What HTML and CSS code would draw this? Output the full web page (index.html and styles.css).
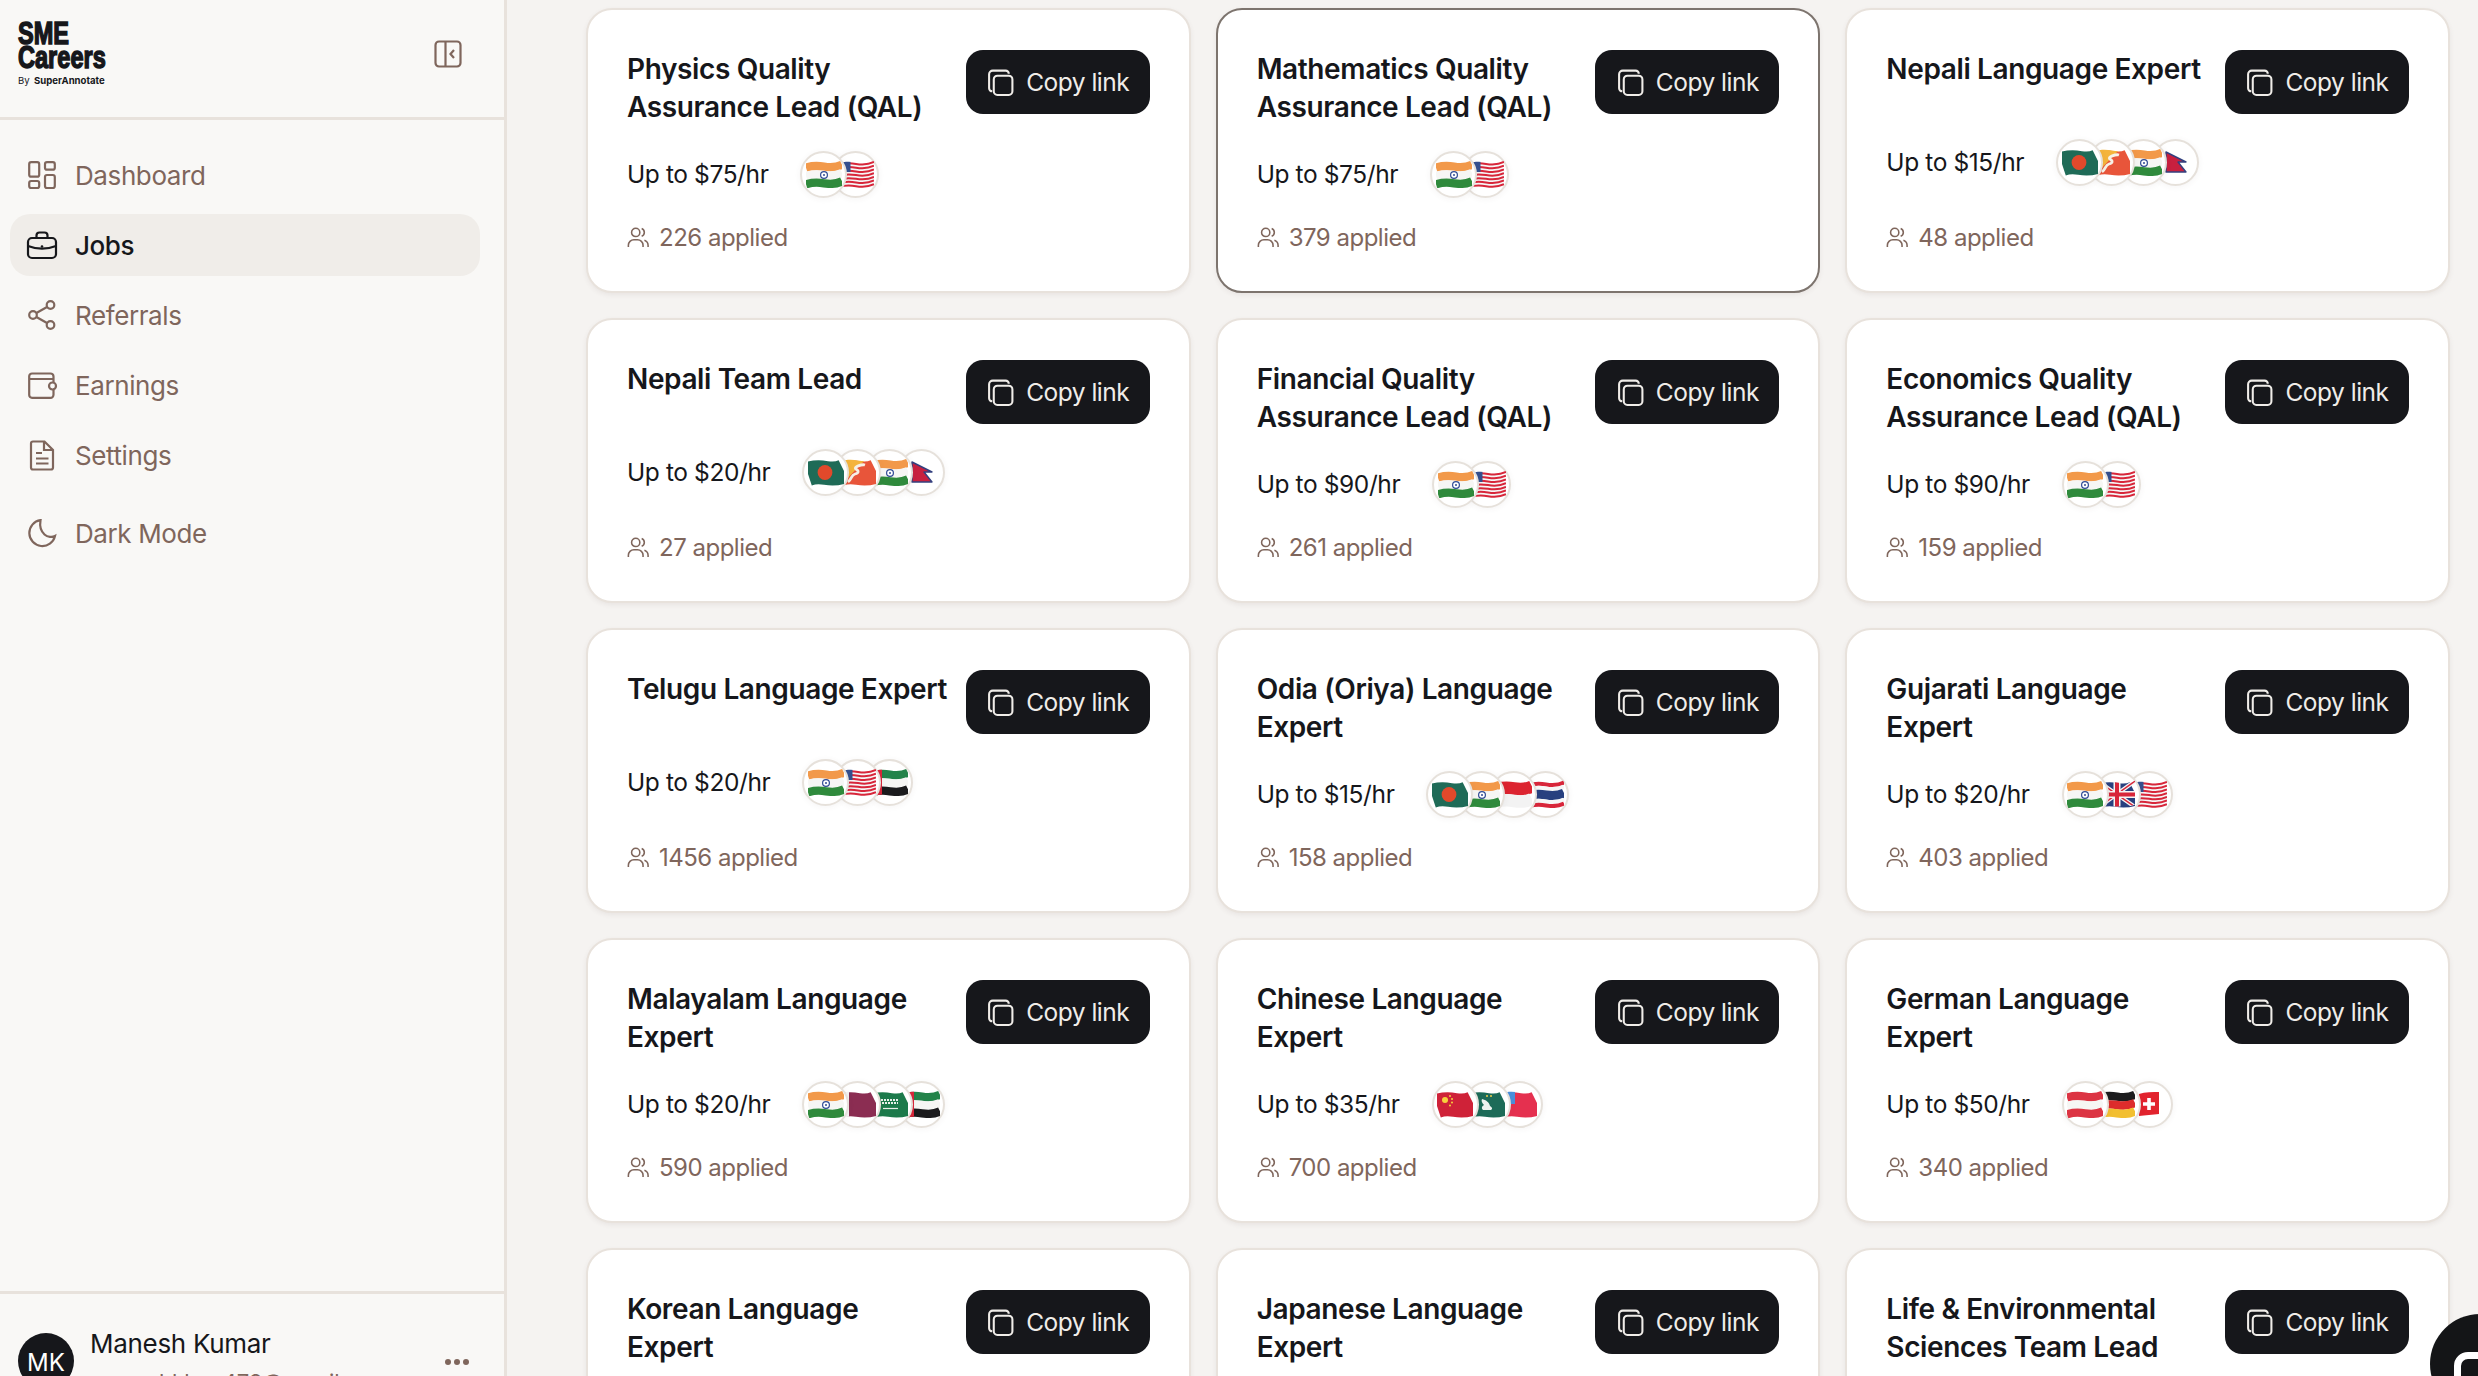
FILE: index.html
```html
<!DOCTYPE html>
<html lang="en">
<head>
  <meta charset="UTF-8" />
  <title>SME Careers – Jobs</title>
  <link rel="stylesheet" href="styles.css">
</head>
<body>

<!-- shared icons and flags -->
<svg class="defs" aria-hidden="true">
  <defs>
    <path id="w" d="M0 1.5C6 -.5 12 -.5 18 .5S30 1.5 36 -1.5" fill="none"/>
    <clipPath id="flag-shape"><path d="M0 3.500C6 1.500 12 1.500 18 2.500S30 3.500 36 .5V24.500C30 27.500 24 26.500 18 26.500S6 26.500 0 28Z"/></clipPath>

    <symbol id="i-copy" viewBox="0 0 28 28">
      <path d="M6 22.500a3 3 0 0 1-3-3V6a3.500 3.500 0 0 1 3.500-3.500H19a3 3 0 0 1 3 3" fill="none" stroke="currentColor" stroke-width="2"/>
      <rect x="7.500" y="7.500" width="18" height="18.500" rx="3.500" fill="none" stroke="currentColor" stroke-width="2"/>
    </symbol>

    <symbol id="f-in" viewBox="0 0 36 28">
      <use href="#w" y="6.200" stroke="#f2994a" stroke-width="8.400"/>
      <use href="#w" y="14.500" stroke="#f6f6f4" stroke-width="8.400"/>
      <use href="#w" y="22.800" stroke="#2f8a3c" stroke-width="8.400"/>
      <circle cx="18" cy="15" r="3.400" fill="#fff" stroke="#2f4a94" stroke-width="1.200"/>
      <circle cx="18" cy="15" r="1" fill="#2f4a94"/>
    </symbol>
    <symbol id="f-us" viewBox="0 0 36 28">
      <use href="#w" y="14.500" stroke="#f6f6f6" stroke-width="24"/>
      <use href="#w" y="3.500" stroke="#d8263a" stroke-width="2"/>
      <use href="#w" y="7.200" stroke="#d8263a" stroke-width="2"/>
      <use href="#w" y="10.900" stroke="#d8263a" stroke-width="2"/>
      <use href="#w" y="14.600" stroke="#d8263a" stroke-width="2"/>
      <use href="#w" y="18.300" stroke="#d8263a" stroke-width="2"/>
      <use href="#w" y="22" stroke="#d8263a" stroke-width="2"/>
      <use href="#w" y="25.700" stroke="#d8263a" stroke-width="2"/>
      <g clip-path="url(#flag-shape)"><rect x="0" y="0" width="12.500" height="12" fill="#34508f"/></g>
    </symbol>
    <symbol id="f-bd" viewBox="0 0 36 28">
      <use href="#w" y="14.500" stroke="#1f6b57" stroke-width="24"/>
      <circle cx="17" cy="14.500" r="7.400" fill="#e2492b"/>
    </symbol>
    <symbol id="f-bt" viewBox="0 0 36 28">
      <use href="#w" y="14.500" stroke="#e8553a" stroke-width="24"/>
      <g clip-path="url(#flag-shape)"><path d="M0 0H27L0 28Z" fill="#f4b43c"/></g>
      <path d="M8 24C12 21 11 17 15 16S19 13 16 11 22 6 25 7" fill="none" stroke="#f6f1e6" stroke-width="2.800"/>
    </symbol>
    <symbol id="f-np" viewBox="0 0 36 28">
      <path d="M8 4L28 14H20L28 24H8Z" fill="#c8203f" stroke="#33407f" stroke-width="1.400" stroke-linejoin="round"/>
    </symbol>
    <symbol id="f-ae" viewBox="0 0 36 28">
      <use href="#w" y="6.200" stroke="#23834a" stroke-width="8.400"/>
      <use href="#w" y="14.500" stroke="#f6f6f4" stroke-width="8.400"/>
      <use href="#w" y="22.800" stroke="#1b1b1d" stroke-width="8.400"/>
      <g clip-path="url(#flag-shape)"><rect width="10" height="28" fill="#d8263a"/></g>
    </symbol>
    <symbol id="f-id" viewBox="0 0 36 28">
      <use href="#w" y="8" stroke="#dc2430" stroke-width="12.500"/>
      <use href="#w" y="20.500" stroke="#f3f3f3" stroke-width="12.500"/>
    </symbol>
    <symbol id="f-th" viewBox="0 0 36 28">
      <use href="#w" y="4" stroke="#d8263a" stroke-width="4"/>
      <use href="#w" y="8" stroke="#f6f6f6" stroke-width="4"/>
      <use href="#w" y="14.500" stroke="#28407f" stroke-width="9"/>
      <use href="#w" y="21" stroke="#f6f6f6" stroke-width="4"/>
      <use href="#w" y="25" stroke="#d8263a" stroke-width="4"/>
    </symbol>
    <symbol id="f-gb" viewBox="0 0 36 28">
      <use href="#w" y="14.500" stroke="#28407f" stroke-width="24"/>
      <g clip-path="url(#flag-shape)">
        <path d="M0 2L36 27M36 1L0 27" stroke="#f4f4f4" stroke-width="4"/>
        <path d="M0 2L36 27M36 1L0 27" stroke="#d8263a" stroke-width="1.500"/>
        <path d="M18 0V28M0 14.500H36" stroke="#f4f4f4" stroke-width="7"/>
        <path d="M18 0V28M0 14.500H36" stroke="#d8263a" stroke-width="4"/>
      </g>
    </symbol>
    <symbol id="f-qa" viewBox="0 0 36 28">
      <use href="#w" y="14.500" stroke="#8b2d52" stroke-width="24"/>
      <g clip-path="url(#flag-shape)"><rect width="9" height="28" fill="#f4f4f4"/></g>
    </symbol>
    <symbol id="f-sa" viewBox="0 0 36 28">
      <use href="#w" y="14.500" stroke="#1c7a4b" stroke-width="24"/>
      <path d="M9 10h18M10 13h16" stroke="#e8f0ea" stroke-width="2" stroke-dasharray="2 1"/>
      <path d="M11 18.500h15" stroke="#e8f0ea" stroke-width="1.200"/>
    </symbol>
    <symbol id="f-cn" viewBox="0 0 36 28">
      <use href="#w" y="14.500" stroke="#cf2238" stroke-width="24"/>
      <circle cx="8" cy="10" r="3" fill="#f7d13c"/>
      <circle cx="13" cy="6" r="1" fill="#f7d13c"/>
      <circle cx="15" cy="9" r="1" fill="#f7d13c"/>
      <circle cx="15" cy="12.500" r="1" fill="#f7d13c"/>
      <circle cx="13" cy="15.500" r="1" fill="#f7d13c"/>
    </symbol>
    <symbol id="f-mo" viewBox="0 0 36 28">
      <use href="#w" y="14.500" stroke="#1d6b58" stroke-width="24"/>
      <path d="M13 9c4 1 7 3 8 7 2 1 3 3 1 4h-8c-2-2-1-4 1-5-2-2-3-4-2-6Z" fill="#eef3ef"/>
      <circle cx="18" cy="6" r="1" fill="#f1cf4a"/>
      <circle cx="22" cy="6" r="1" fill="#f1cf4a"/>
    </symbol>
    <symbol id="f-tw" viewBox="0 0 36 28">
      <use href="#w" y="14.500" stroke="#e5304f" stroke-width="24"/>
      <g clip-path="url(#flag-shape)"><rect width="14" height="14" fill="#4a8fdc"/></g>
    </symbol>
    <symbol id="f-at" viewBox="0 0 36 28">
      <use href="#w" y="6.200" stroke="#dc3443" stroke-width="8.400"/>
      <use href="#w" y="14.500" stroke="#f6f6f4" stroke-width="8.400"/>
      <use href="#w" y="22.800" stroke="#dc3443" stroke-width="8.400"/>
    </symbol>
    <symbol id="f-de" viewBox="0 0 36 28">
      <use href="#w" y="6.200" stroke="#1c1c1e" stroke-width="8.400"/>
      <use href="#w" y="14.500" stroke="#dd2c2c" stroke-width="8.400"/>
      <use href="#w" y="22.800" stroke="#f2bf30" stroke-width="8.400"/>
    </symbol>
    <symbol id="f-ch" viewBox="0 0 36 28">
      <path d="M8 4C14 2 22 2 28 2V24C22 25 14 25 8 26Z" fill="#e2232e"/>
      <path d="M18 8V20M12 14H24" stroke="#fff" stroke-width="3.600"/>
    </symbol>

    <symbol id="i-people" viewBox="0 0 24 24">
      <circle cx="9.500" cy="7" r="4.500" fill="none" stroke="currentColor" stroke-width="1.700"/>
      <path d="M1.500 23v-2a6 6 0 0 1 6-6h4a6 6 0 0 1 6 6v2M16 2.800a4.500 4.500 0 0 1 0 8.400M19 15.500a6 6 0 0 1 4 5.500v2" fill="none" stroke="currentColor" stroke-width="1.700"/>
    </symbol>
  </defs>
</svg>

<div class="app">
  <aside class="sidebar">
    <div class="side-top">
      <div class="logo">
        <div class="logo-main">SME<br>Careers</div>
        <div class="logo-by"><span>By</span> SuperAnnotate</div>
      </div>
      <button class="collapse">
        <svg width="28" height="28" viewBox="0 0 28 28" fill="none" stroke="currentColor" stroke-width="2.200">
          <rect x="1.500" y="1.500" width="25" height="25" rx="3.500"/>
          <path d="M11.500 1.500v25M20 10l-3.500 4 3.500 4"/>
        </svg>
      </button>
    </div>

    <nav class="nav">
      <a class="nav-item">
        <svg class="nav-icon" viewBox="0 0 32 32"><rect x="3.200" y="3.200" width="10" height="14.500" rx="2"/><rect x="19" y="3.200" width="9.800" height="7.500" rx="2"/><rect x="3.200" y="22" width="10" height="7" rx="2"/><rect x="19" y="16" width="9.800" height="13" rx="2"/></svg>
        Dashboard
      </a>
      <a class="nav-item active">
        <svg class="nav-icon" viewBox="0 0 32 32"><rect x="2" y="9" width="28" height="20" rx="4"/><path d="M10.500 9V6.500a3 3 0 0 1 3-3h5a3 3 0 0 1 3 3V9M2 17c9 3.500 19 3.500 28 0"/><circle class="dot" cx="16" cy="17.500" r="1.300"/></svg>
        Jobs
      </a>
      <a class="nav-item">
        <svg class="nav-icon" viewBox="0 0 32 32"><circle cx="24.500" cy="6" r="3.800"/><circle cx="7" cy="16" r="3.800"/><circle cx="24.500" cy="26" r="3.800"/><path d="M10.400 14L21 8M10.400 18L21 24"/></svg>
        Referrals
      </a>
      <a class="nav-item">
        <svg class="nav-icon" viewBox="0 0 32 32"><path d="M27.500 13V7.500a3 3 0 0 0-3-3H6a2.800 2.800 0 0 0-2.800 2.800V26a2.800 2.800 0 0 0 2.800 2.800h18.500a3 3 0 0 0 3-3V21M3.200 10h24.300"/><rect x="23" y="13.500" width="7" height="7" rx="3.500"/></svg>
        Earnings
      </a>
      <a class="nav-item">
        <svg class="nav-icon" viewBox="0 0 32 32"><path d="M7 2.500h11.500L27 11v17.500a2 2 0 0 1-2 2H7a2 2 0 0 1-2-2v-24a2 2 0 0 1 2-2ZM18 2.500V11h9M10 14h6M10 19.500h12.500M10 24.500h12.500"/></svg>
        Settings
      </a>
      <a class="nav-item nav-mode">
        <svg class="nav-icon" viewBox="0 0 32 32"><path d="M14.500 3.200A13 13 0 1 0 29 19c-2.500 1.500-7.500 1.300-10.500-1.500S13.500 9 14.500 3.200Z"/></svg>
        Dark Mode
      </a>
    </nav>

    <div class="side-user">
      <div class="avatar">MK</div>
      <div class="user-text">
        <div class="user-name">Manesh Kumar</div>
        <div class="user-mail">maneshkhan479@gmail.com</div>
      </div>
      <div class="user-more"><span></span><span></span><span></span></div>
    </div>
  </aside>

  <main class="jobs">
    <div class="card">
      <div class="card-head"><h3>Physics Quality Assurance Lead (QAL)</h3><button class="copy"><svg><use href="#i-copy"/></svg>Copy link</button></div>
      <div class="pay">Up to $75/hr <div class="flags"><span class="flag"><svg><use href="#f-in"/></svg></span><span class="flag"><svg><use href="#f-us"/></svg></span></div></div>
      <div class="applied"><svg><use href="#i-people"/></svg>226 applied</div>
    </div>
    <div class="card hovered">
      <div class="card-head"><h3>Mathematics Quality Assurance Lead (QAL)</h3><button class="copy"><svg><use href="#i-copy"/></svg>Copy link</button></div>
      <div class="pay">Up to $75/hr <div class="flags"><span class="flag"><svg><use href="#f-in"/></svg></span><span class="flag"><svg><use href="#f-us"/></svg></span></div></div>
      <div class="applied"><svg><use href="#i-people"/></svg>379 applied</div>
    </div>
    <div class="card">
      <div class="card-head"><h3>Nepali Language Expert</h3><button class="copy"><svg><use href="#i-copy"/></svg>Copy link</button></div>
      <div class="pay">Up to $15/hr <div class="flags"><span class="flag"><svg><use href="#f-bd"/></svg></span><span class="flag"><svg><use href="#f-bt"/></svg></span><span class="flag"><svg><use href="#f-in"/></svg></span><span class="flag"><svg><use href="#f-np"/></svg></span></div></div>
      <div class="applied"><svg><use href="#i-people"/></svg>48 applied</div>
    </div>

    <div class="card">
      <div class="card-head"><h3>Nepali Team Lead</h3><button class="copy"><svg><use href="#i-copy"/></svg>Copy link</button></div>
      <div class="pay">Up to $20/hr <div class="flags"><span class="flag"><svg><use href="#f-bd"/></svg></span><span class="flag"><svg><use href="#f-bt"/></svg></span><span class="flag"><svg><use href="#f-in"/></svg></span><span class="flag"><svg><use href="#f-np"/></svg></span></div></div>
      <div class="applied"><svg><use href="#i-people"/></svg>27 applied</div>
    </div>
    <div class="card">
      <div class="card-head"><h3>Financial Quality Assurance Lead (QAL)</h3><button class="copy"><svg><use href="#i-copy"/></svg>Copy link</button></div>
      <div class="pay">Up to $90/hr <div class="flags"><span class="flag"><svg><use href="#f-in"/></svg></span><span class="flag"><svg><use href="#f-us"/></svg></span></div></div>
      <div class="applied"><svg><use href="#i-people"/></svg>261 applied</div>
    </div>
    <div class="card">
      <div class="card-head"><h3>Economics Quality Assurance Lead (QAL)</h3><button class="copy"><svg><use href="#i-copy"/></svg>Copy link</button></div>
      <div class="pay">Up to $90/hr <div class="flags"><span class="flag"><svg><use href="#f-in"/></svg></span><span class="flag"><svg><use href="#f-us"/></svg></span></div></div>
      <div class="applied"><svg><use href="#i-people"/></svg>159 applied</div>
    </div>

    <div class="card">
      <div class="card-head"><h3>Telugu Language Expert</h3><button class="copy"><svg><use href="#i-copy"/></svg>Copy link</button></div>
      <div class="pay">Up to $20/hr <div class="flags"><span class="flag"><svg><use href="#f-in"/></svg></span><span class="flag"><svg><use href="#f-us"/></svg></span><span class="flag"><svg><use href="#f-ae"/></svg></span></div></div>
      <div class="applied"><svg><use href="#i-people"/></svg>1456 applied</div>
    </div>
    <div class="card">
      <div class="card-head"><h3>Odia (Oriya) Language Expert</h3><button class="copy"><svg><use href="#i-copy"/></svg>Copy link</button></div>
      <div class="pay">Up to $15/hr <div class="flags"><span class="flag"><svg><use href="#f-bd"/></svg></span><span class="flag"><svg><use href="#f-in"/></svg></span><span class="flag"><svg><use href="#f-id"/></svg></span><span class="flag"><svg><use href="#f-th"/></svg></span></div></div>
      <div class="applied"><svg><use href="#i-people"/></svg>158 applied</div>
    </div>
    <div class="card">
      <div class="card-head"><h3>Gujarati Language Expert</h3><button class="copy"><svg><use href="#i-copy"/></svg>Copy link</button></div>
      <div class="pay">Up to $20/hr <div class="flags"><span class="flag"><svg><use href="#f-in"/></svg></span><span class="flag"><svg><use href="#f-gb"/></svg></span><span class="flag"><svg><use href="#f-us"/></svg></span></div></div>
      <div class="applied"><svg><use href="#i-people"/></svg>403 applied</div>
    </div>

    <div class="card">
      <div class="card-head"><h3>Malayalam Language Expert</h3><button class="copy"><svg><use href="#i-copy"/></svg>Copy link</button></div>
      <div class="pay">Up to $20/hr <div class="flags"><span class="flag"><svg><use href="#f-in"/></svg></span><span class="flag"><svg><use href="#f-qa"/></svg></span><span class="flag"><svg><use href="#f-sa"/></svg></span><span class="flag"><svg><use href="#f-ae"/></svg></span></div></div>
      <div class="applied"><svg><use href="#i-people"/></svg>590 applied</div>
    </div>
    <div class="card">
      <div class="card-head"><h3>Chinese Language Expert</h3><button class="copy"><svg><use href="#i-copy"/></svg>Copy link</button></div>
      <div class="pay">Up to $35/hr <div class="flags"><span class="flag"><svg><use href="#f-cn"/></svg></span><span class="flag"><svg><use href="#f-mo"/></svg></span><span class="flag"><svg><use href="#f-tw"/></svg></span></div></div>
      <div class="applied"><svg><use href="#i-people"/></svg>700 applied</div>
    </div>
    <div class="card">
      <div class="card-head"><h3>German Language Expert</h3><button class="copy"><svg><use href="#i-copy"/></svg>Copy link</button></div>
      <div class="pay">Up to $50/hr <div class="flags"><span class="flag"><svg><use href="#f-at"/></svg></span><span class="flag"><svg><use href="#f-de"/></svg></span><span class="flag"><svg><use href="#f-ch"/></svg></span></div></div>
      <div class="applied"><svg><use href="#i-people"/></svg>340 applied</div>
    </div>

    <div class="card">
      <div class="card-head"><h3>Korean Language<br>Expert</h3><button class="copy"><svg><use href="#i-copy"/></svg>Copy link</button></div>
    </div>
    <div class="card">
      <div class="card-head"><h3>Japanese Language Expert</h3><button class="copy"><svg><use href="#i-copy"/></svg>Copy link</button></div>
    </div>
    <div class="card">
      <div class="card-head"><h3>Life &amp; Environmental Sciences Team Lead</h3><button class="copy"><svg><use href="#i-copy"/></svg>Copy link</button></div>
    </div>
  </main>
</div>

<!-- chat bubble, cut off by the window corner -->
<div class="chat"><span class="chat-c"></span></div>

</body>
</html>
```

FILE: styles.css
```css
:root {
  --ink: #16171b;
  --brown: #7f665c;
  --line: #e8e2dc;
  --side-bg: #f9f8f6;
  --main-bg: #f5f3f1;
  --active: #f0ede9;
}

* {
  box-sizing: border-box;
}

html, body {
  margin: 0;
  height: 100%;
  overflow: hidden;
}

body {
  font-family: 'Inter', sans-serif;
  color: var(--ink);
  background: var(--main-bg);
}

.defs {
  position: absolute;
  width: 0;
  height: 0;
}

.app {
  display: flex;
  height: 100vh;
}

/* sidebar */
.sidebar {
  flex: 0 0 507px;
  height: 100%;
  display: flex;
  flex-direction: column;
  background: var(--side-bg);
  border-right: 3px solid var(--line);
  overflow: hidden;
}

.side-top {
  flex: 0 0 120px;
  display: flex;
  justify-content: space-between;
  padding: 22px 42px 0 18px;
  border-bottom: 3px solid var(--line);
}

.logo-main {
  font-family: 'Liberation Sans', sans-serif;
  font-weight: 700;
  font-size: 31px;
  line-height: 24px;
  -webkit-text-stroke: 1.5px var(--ink);
  transform: scaleX(0.76);
  transform-origin: left top;
  width: 150px;
}

.logo-by {
  margin-top: 5px;
  font-size: 9.6px;
  line-height: 11px;
  font-weight: 700;
  white-space: nowrap;
}

.logo-by span {
  font-weight: 400;
  margin-right: 2px;
}

.collapse {
  align-self: flex-start;
  margin-top: 18px;
  padding: 0;
  border: none;
  background: none;
  color: var(--brown);
  line-height: 0;
}

.nav {
  flex: 1;
  display: flex;
  flex-direction: column;
  gap: 8px;
  padding: 24px 24px 0 10px;
}

.nav-item {
  height: 62px;
  display: flex;
  align-items: center;
  gap: 17px;
  padding-left: 16px;
  border-radius: 20px;
  font-size: 26px;
  letter-spacing: -0.4px;
  color: var(--brown);
}

.nav-item.active {
  background: var(--active);
  color: var(--ink);
  font-weight: 500;
}

.nav-mode {
  margin-top: 8px;
}

.nav-icon {
  width: 32px;
  height: 32px;
  fill: none;
  stroke: currentColor;
  stroke-width: 2.2;
}

.nav-icon .dot {
  fill: currentColor;
  stroke: none;
}

.side-user {
  flex: 0 0 85px;
  height: 85px;
  min-height: 0;
  position: relative;
  display: flex;
  padding: 39px 0 0 18px;
  border-top: 3px solid var(--line);
}

.avatar {
  flex: 0 0 56px;
  height: 56px;
  padding-top: 3px;
  border-radius: 50%;
  background: var(--ink);
  color: #fff;
  font-size: 24px;
  display: flex;
  align-items: center;
  justify-content: center;
}

.user-text {
  margin: -6px 0 0 16px;
}

.user-name {
  font-size: 26px;
  line-height: 34px;
  letter-spacing: -0.3px;
}

.user-mail {
  font-size: 22px;
  margin-top: 8px;
  color: var(--brown);
}

.user-more {
  position: absolute;
  top: 65px;
  right: 35px;
  display: flex;
  gap: 3px;
}

.user-more span {
  width: 6px;
  height: 6px;
  border-radius: 50%;
  background: var(--brown);
}

/* job cards */
.jobs {
  flex: 1;
  display: grid;
  grid-template-columns: repeat(3, 1fr);
  grid-auto-rows: 285px;
  gap: 25px;
  padding: 8px 28px 0 79px;
  align-content: start;
  overflow: hidden;
}

.card {
  display: flex;
  flex-direction: column;
  padding: 40px 39px 39px 39px;
  background: #fff;
  border: 2px solid var(--line);
  border-radius: 26px;
  box-shadow: 0 2px 5px rgba(90, 70, 60, 0.08);
}

.card.hovered {
  border-color: #7d746e;
}

.card-head {
  display: flex;
  justify-content: space-between;
  align-items: flex-start;
  gap: 16px;
}

.card-head h3 {
  margin: 0;
  font-size: 28px;
  line-height: 38px;
  font-weight: 560;
  letter-spacing: -0.38px;
}

.copy {
  flex: 0 0 184px;
  height: 64px;
  display: flex;
  align-items: center;
  justify-content: center;
  gap: 11px;
  border: none;
  border-radius: 17px;
  background: var(--ink);
  color: #f0ede9;
  font-family: inherit;
  font-size: 24.5px;
  letter-spacing: -0.5px;
}

.copy svg {
  width: 29px;
  height: 29px;
}

.pay {
  display: flex;
  align-items: center;
  gap: 32px;
  margin-top: 24px;
  height: 48px;
  font-size: 24.5px;
  letter-spacing: -0.4px;
}

.flags {
  display: flex;
}

.flag {
  position: relative;
  width: 47px;
  height: 47px;
  margin-right: -15px;
  display: flex;
  align-items: center;
  justify-content: center;
  background: #fff;
  border: 2px solid #e6e1db;
  border-radius: 50%;
  box-shadow: 0 1px 6px rgba(90, 70, 60, 0.06);
}

.flag svg {
  width: 36px;
  height: 28px;
  flex: none;
}

.flag:nth-child(1) { z-index: 4; }
.flag:nth-child(2) { z-index: 3; }
.flag:nth-child(3) { z-index: 2; }
.flag:nth-child(4) { z-index: 1; }

.applied {
  margin-top: auto;
  display: flex;
  align-items: center;
  gap: 10px;
  height: 30px;
  font-size: 24px;
  letter-spacing: -0.5px;
  color: var(--brown);
}

.applied svg {
  width: 22px;
  height: 22px;
}

.chat {
  position: fixed;
  left: 2430px;
  top: 1314px;
  width: 100px;
  height: 100px;
  border-radius: 50%;
  background: #141517;
}

.chat-c {
  position: absolute;
  left: 24px;
  top: 38px;
  width: 40px;
  height: 40px;
  border: 7px solid #fff;
  border-radius: 14px;
}
```
